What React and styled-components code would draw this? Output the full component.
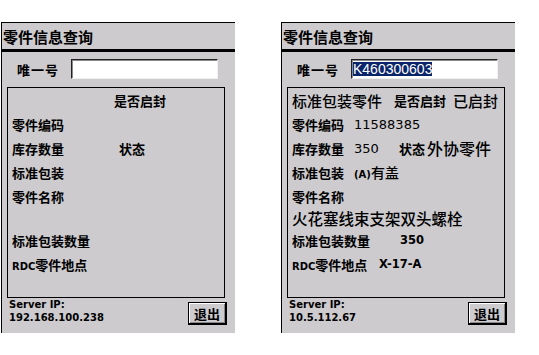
import React from "react";
import styled, { createGlobalStyle } from "styled-components";

const GlobalStyle = createGlobalStyle`
  body {
    margin: 0;
    background: #fff;
    font-family: "Noto Sans CJK SC", "DejaVu Sans", sans-serif;
    color: #000;
  }
`;

const Page = styled.div`
  display: flex;
  gap: 46px;
  padding: 22px 0 0 1px;
`;

const Panel = styled.div`
  width: 234px;
  height: 311px;
  box-sizing: border-box;
  background: #cdcbce;
  border-top: 1px solid #000;
  border-left: 1px solid #000;
  display: flex;
  flex-direction: column;
`;

const TitleBar = styled.div`
  height: 25px;
  border-bottom: 3px solid #000;
  padding: 1px 0 0 1px;
  box-sizing: content-box;
  font-size: 15px;
  font-weight: 700;
  line-height: 25px;
  margin-bottom: -1px;
`;

const SearchRow = styled.div`
  display: flex;
  align-items: center;
  height: 20px;
  margin-top: 8px;
`;

const SearchLabel = styled.div`
  width: 54px;
  padding-left: 15px;
  font-size: 13px;
  font-weight: 700;
  letter-spacing: 1px;
`;

const Field = styled.div`
  width: 147px;
  height: 20px;
  box-sizing: border-box;
  background: #fff;
  border: 1px solid;
  border-color: #222 #f0f0f0 #f0f0f0 #222;
  box-shadow: inset 1px 1px 0 #888;
  display: flex;
  align-items: center;
  padding-left: 1px;
`;

const Selected = styled.span`
  background: #0a246a;
  color: #fff;
  font-family: "Liberation Sans", Arial, sans-serif;
  font-size: 14px;
  line-height: 14px;
`;

const Box = styled.div`
  width: 218px;
  height: 211px;
  box-sizing: border-box;
  margin: 8px 0 0 5px;
  border: 1px solid #000;
  padding-top: 0;
`;

const Row = styled.div`
  display: flex;
  align-items: center;
  height: ${(p) => p.$h || 24}px;
  padding-left: 4px;
  white-space: nowrap;
`;

const Label = styled.div`
  flex: none;
  width: ${(p) => (p.$w ? `${p.$w}px` : "auto")};
  font-size: 13px;
  font-weight: 700;
`;

const Latin = styled.span`
  font-family: "DejaVu Sans", sans-serif;
  font-size: 10px;
  font-weight: 700;
`;

const Value = styled.div`
  flex: none;
  width: ${(p) => (p.$w ? `${p.$w}px` : "auto")};
  margin-left: ${(p) => p.$ml || 0}px;
  font-size: ${(p) => p.$size || 15}px;
  font-weight: 500;
`;

const Num = styled.div`
  flex: none;
  width: ${(p) => (p.$w ? `${p.$w}px` : "auto")};
  font-family: "DejaVu Sans", sans-serif;
  font-size: ${(p) => (p.$bold ? 11.5 : 13)}px;
  font-weight: ${(p) => (p.$bold ? 700 : 400)};
`;

const Footer = styled.div`
  flex: 1;
  display: flex;
  justify-content: space-between;
  padding: 0 8px 0 7px;
`;

const ServerInfo = styled.div`
  font-family: "DejaVu Sans", sans-serif;
  font-size: 10px;
  font-weight: 700;
  line-height: 13px;
`;

const ExitButton = styled.div`
  width: 39px;
  height: 23px;
  box-sizing: border-box;
  margin-top: 4px;
  border: 1px solid #000;
  border-right-width: 2px;
  border-bottom-width: 2px;
  box-shadow: inset 1px 1px 0 #fff, inset -1px -1px 0 #888;
  display: flex;
  align-items: center;
  justify-content: center;
  font-size: 13px;
  font-weight: 700;
`;

const QueryPanel = ({ data, ip }) => (
  <Panel>
    <TitleBar>零件信息查询</TitleBar>
    <SearchRow>
      <SearchLabel>唯一号</SearchLabel>
      <Field>{data && <Selected>{data.id}</Selected>}</Field>
    </SearchRow>
    <Box>
      <Row>
        <Value $w={102} $size={15}>{data?.kind}</Value>
        <Label>是否启封</Label>
        <Value $ml={7}>{data?.opened}</Value>
      </Row>
      <Row>
        <Label $w={62}>零件编码</Label>
        <Num>{data?.code}</Num>
      </Row>
      <Row>
        <Label $w={62}>库存数量</Label>
        <Num $w={45}>{data?.stock}</Num>
        <Label>状态</Label>
        <Value $ml={2} $size={16}>{data?.status}</Value>
      </Row>
      <Row>
        <Label $w={62}>标准包装</Label>
        <Value $size={14}>
          {data && (
            <>
              <Latin>(A)</Latin>有盖
            </>
          )}
        </Value>
      </Row>
      <Row>
        <Label>零件名称</Label>
      </Row>
      <Row $h={20}>
        <Value $size={15.5}>{data?.name}</Value>
      </Row>
      <Row>
        <Label $w={108}>标准包装数量</Label>
        <Num $bold>{data?.pack}</Num>
      </Row>
      <Row>
        <Label $w={87}>
          <Latin>RDC</Latin>零件地点
        </Label>
        <Num $bold>{data?.place}</Num>
      </Row>
    </Box>
    <Footer>
      <ServerInfo>
        Server IP:
        <br />
        {ip}
      </ServerInfo>
      <ExitButton>退出</ExitButton>
    </Footer>
  </Panel>
);

const part = {
  id: "K460300603",
  kind: "标准包装零件",
  opened: "已启封",
  code: "11588385",
  stock: "350",
  status: "外协零件",
  name: "火花塞线束支架双头螺栓",
  pack: "350",
  place: "X-17-A",
};

export default function App() {
  return (
    <>
      <GlobalStyle />
      <Page>
        <QueryPanel ip="192.168.100.238" />
        <QueryPanel data={part} ip="10.5.112.67" />
      </Page>
    </>
  );
}
